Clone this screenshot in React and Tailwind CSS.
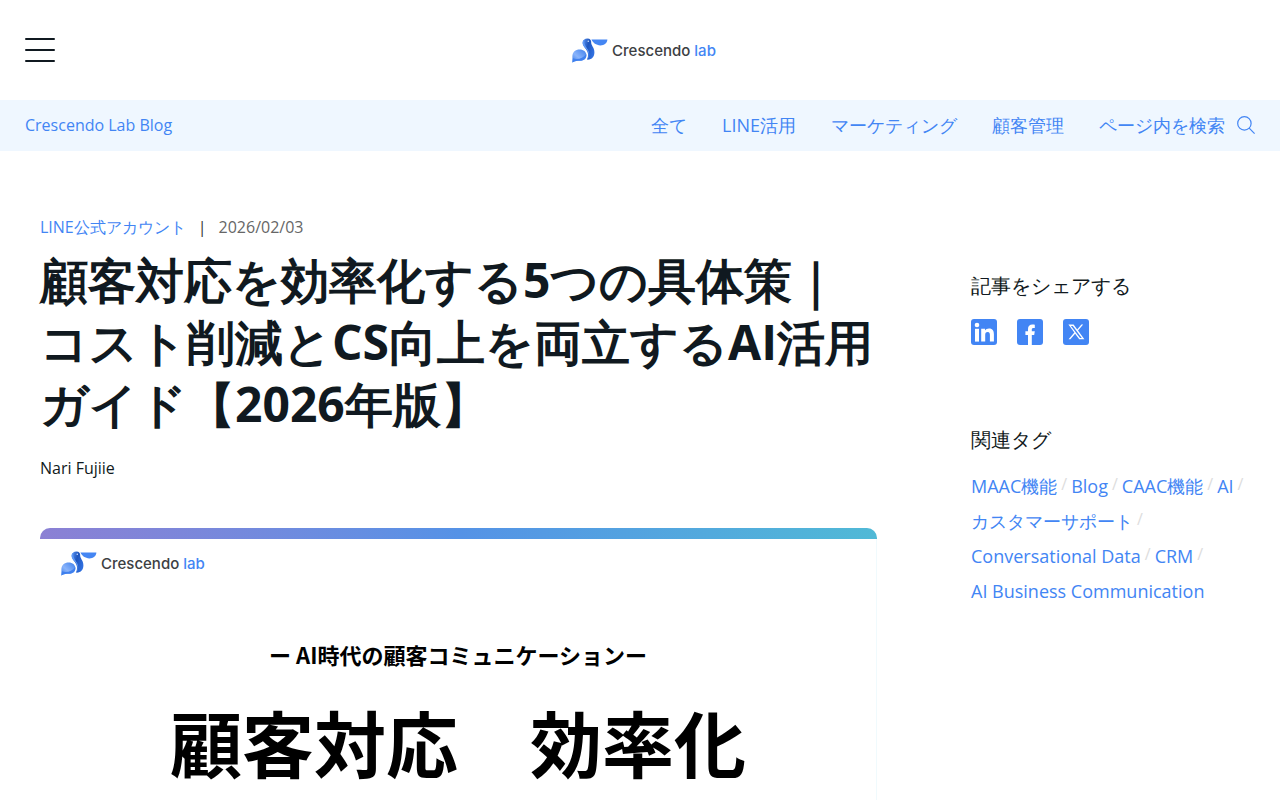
const categories = ['全て', 'LINE活用', 'マーケティング', '顧客管理'];

const tags = [
  'MAAC機能',
  'Blog',
  'CAAC機能',
  'AI',
  'カスタマーサポート',
  'Conversational Data',
  'CRM',
  'AI Business Communication',
];

function Pelican({ className, id }) {
  return (
    <svg viewBox="0 0 36 25" className={className} aria-hidden="true">
      <defs>
        <linearGradient id={id + '-wing'} x1="0" y1="1" x2="0.9" y2="0.1">
          <stop offset="0" stopColor="#3b7de8" />
          <stop offset="0.45" stopColor="#8ab4fb" />
          <stop offset="1" stopColor="#4a88ee" />
        </linearGradient>
        <linearGradient id={id + '-neck'} x1="0" y1="0" x2="1" y2="0.5">
          <stop offset="0" stopColor="#5e98f5" />
          <stop offset="0.5" stopColor="#1f55bd" />
          <stop offset="1" stopColor="#2f6fdf" />
        </linearGradient>
      </defs>
      <path d="M0.4 24.5V18.4C0.4 13.8 3.6 11.4 7.6 11.4C11.6 11.4 14.4 13.8 14.4 17.2C14.4 21 11.6 22.8 8 22.8C5.2 22.8 2.8 23 0.4 24.5Z" fill={'url(#' + id + '-wing)'} />
      <path d="M1 20.2C5 22 11 20.6 14.2 16C15 20.4 11.6 22.8 8 22.8C5.2 22.8 2.8 23 0.4 24.5Z" fill="#3f80ee" />
      <path d="M10.6 4.8C10.6 2 12.8 0.4 15.4 0.4C18.2 0.4 19.4 2.2 19.2 4.6C19 7.4 22.4 9.6 22.4 14.2C22.4 18.6 19.8 22 15 21.6C16.6 18 16.6 14.6 14 11.2C12 8.6 10.6 7.4 10.6 4.8Z" fill={'url(#' + id + '-neck)'} />
      <path d="M12.4 1.6C10.4 2.8 10.1 5.2 11.4 7.4C13 10 16.2 12.2 16.6 15.8C16.8 18 16.2 20.2 15 21.6C17.8 19.2 17.8 14.8 15.8 11.6C14 8.6 11.6 6 12.4 1.6Z" fill="#5e98f5" />
      <circle cx="16.3" cy="3.2" r="0.8" fill="#cfe0fd" />
      <path d="M19.4 1.6H35.4C35.2 5.4 32.2 7.4 28.4 7.4C24 7.4 21 5 19.4 1.6Z" fill="#4486f3" />
    </svg>
  );
}

function Logo({ id }) {
  return (
    <>
      <Pelican className="h-[25px] w-9" id={id} />
      <span className="font-['Inter',sans-serif] text-[15px] leading-6 font-medium text-[#3c4043]">
        Crescendo <span className="text-[#4285f4]">lab</span>
      </span>
    </>
  );
}

function SearchIcon() {
  return (
    <svg viewBox="0 0 18 18" className="size-[18px]" fill="none" stroke="#4285f4" strokeWidth="1.2" aria-hidden="true">
      <circle cx="7.4" cy="7.4" r="6.7" />
      <path d="M12.2 12.2L17.6 17.6" />
    </svg>
  );
}

function ShareLink({ label, children }) {
  return (
    <a href="#share" aria-label={label} className="block size-[26px]">
      <svg viewBox="0 0 26 26" className="size-full" aria-hidden="true">
        <rect width="26" height="26" rx="3" fill="#4285f4" />
        {children}
      </svg>
    </a>
  );
}

export default function App() {
  return (
    <div className="min-h-screen bg-white font-['Open_Sans',sans-serif] text-base text-[#101920]">
      <header className="grid h-[100px] grid-cols-[1fr_auto_1fr] items-center px-[25px]">
        <button type="button" aria-label="メニュー" className="flex w-[30px] flex-col gap-[9px]">
          <span className="h-[2px] w-full rounded-sm bg-[#101920]" />
          <span className="h-[2px] w-full rounded-sm bg-[#101920]" />
          <span className="h-[2px] w-full rounded-sm bg-[#101920]" />
        </button>
        <a href="#home" className="flex items-center gap-1 pt-px pl-2">
          <Logo id="top" />
        </a>
      </header>

      <nav className="flex h-[51px] items-center justify-between bg-[#eff7ff] px-[25px] pb-[2px] text-[#4285f4]">
        <a href="#blog">Crescendo Lab Blog</a>
        <div className="flex items-center gap-[35px] text-lg">
          {categories.map((c) => (
            <a key={c} href="#category">{c}</a>
          ))}
          <button type="button" className="flex items-center gap-3">
            ページ内を検索
            <SearchIcon />
          </button>
        </div>
      </nav>

      <div className="flex gap-[94px] pr-[30px] pl-10">
        <main className="min-w-0 flex-1 pt-16">
          <div className="flex gap-3 leading-6">
            <a href="#category" className="text-[#4285f4]">LINE公式アカウント</a>
            <span className="text-[#333]">|</span>
            <time dateTime="2026-02-03" className="text-[#666]">2026/02/03</time>
          </div>
          <h1 className="mt-[10px] text-5xl leading-[62px] font-bold">
            顧客対応を効率化する5つの具体策｜コスト削減とCS向上を両立するAI活用ガイド【2026年版】
          </h1>
          <p className="mt-[21px] leading-6">Nari Fujiie</p>

          <figure className="mt-12 overflow-hidden rounded-[10px] bg-[#f0fafd]">
            <div className="h-[11px] bg-linear-to-r from-[#8b80d4] via-[#5592e6] to-[#50b9d6]" />
            <div className="mr-px flex items-center gap-1 bg-white pt-3 pl-[21px]">
              <Logo id="hero" />
            </div>
            <figcaption className="mr-px bg-white pt-[62px] pb-20 text-center font-['Noto_Sans_CJK_JP',sans-serif] text-black">
              <p className="text-[22px] leading-8 font-bold">ー AI時代の顧客コミュニケーションー</p>
              <p className="mt-6 text-7xl leading-[94px] font-bold">顧客対応　効率化</p>
            </figcaption>
          </figure>
        </main>

        <aside className="w-[279px] shrink-0 pt-[120px]">
          <h2 className="text-xl leading-[30px]">記事をシェアする</h2>
          <div className="mt-[18px] flex gap-5">
            <ShareLink label="LinkedIn">
              <g fill="#fff">
                <circle cx="6" cy="6" r="2.3" />
                <path d="M4 9.8H8V22.6H4Z" />
                <path d="M10.2 9.8H14V11.6C14.7 10.3 16.2 9.4 18 9.4C21.8 9.4 22.9 11.8 22.9 15.4V22.6H18.9V16.1C18.9 14.4 18.6 13 16.7 13C14.8 13 14.2 14.3 14.2 16.1V22.6H10.2Z" />
              </g>
            </ShareLink>
            <ShareLink label="Facebook">
              <path fill="#fff" d="M11 26V16H8.4V12.3H11V10C11 7.2 12.7 5.6 15.3 5.6C16.6 5.6 17.8 5.8 17.8 5.8V9H16.3C15 9 14.8 9.8 14.8 10.6V12.3H17.8L17.2 16H14.8V26Z" />
            </ShareLink>
            <ShareLink label="X">
              <path fill="#fff" d="M5.4 5.6H10.6L14.2 10.4L18.4 5.6H20.2L15 11.5L21.4 20.2H16.2L12.1 14.7L7.4 20.2H5.6L11.3 13.5ZM7.9 6.9L17 18.9H18.8L9.8 6.9Z" />
            </ShareLink>
          </div>

          <h2 className="mt-20 text-xl leading-[30px]">関連タグ</h2>
          <ul className="mt-[14px] flex flex-wrap text-lg leading-[35px] text-[#4285f4]">
            {tags.map((t, i) => (
              <li key={t} className="flex">
                <a href="#tag" className="whitespace-nowrap">{t}</a>
                {i < tags.length - 1 && (
                  <span aria-hidden="true" className="px-1 text-base leading-[30px] text-[#ddd]">/</span>
                )}
              </li>
            ))}
          </ul>
        </aside>
      </div>
    </div>
  );
}
